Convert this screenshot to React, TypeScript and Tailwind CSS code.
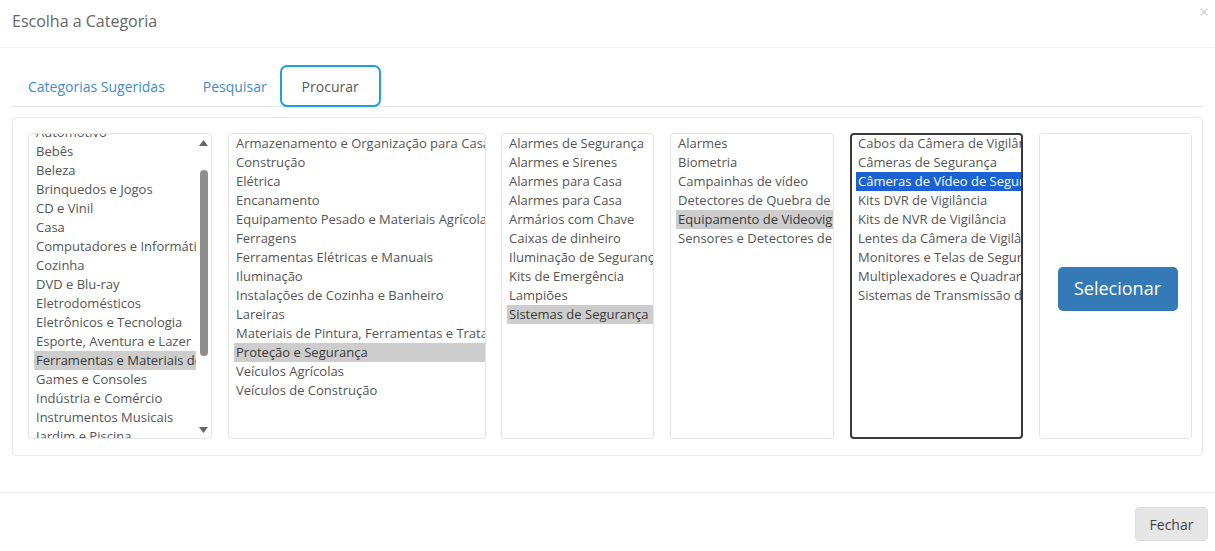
import React from 'react'

const col1 = [
    'Automotivo', 'Bebês', 'Beleza', 'Brinquedos e Jogos', 'CD e Vinil', 'Casa',
    'Computadores e Informática', 'Cozinha', 'DVD e Blu-ray', 'Eletrodomésticos',
    'Eletrônicos e Tecnologia', 'Esporte, Aventura e Lazer', 'Ferramentas e Materiais de Construção',
    'Games e Consoles', 'Indústria e Comércio', 'Instrumentos Musicais', 'Jardim e Piscina',
]

const col2 = [
    'Armazenamento e Organização para Casa', 'Construção', 'Elétrica', 'Encanamento',
    'Equipamento Pesado e Materiais Agrícolas', 'Ferragens', 'Ferramentas Elétricas e Manuais',
    'Iluminação', 'Instalações de Cozinha e Banheiro', 'Lareiras',
    'Materiais de Pintura, Ferramentas e Tratamento', 'Proteção e Segurança',
    'Veículos Agrícolas', 'Veículos de Construção',
]

const col3 = [
    'Alarmes de Segurança', 'Alarmes e Sirenes', 'Alarmes para Casa', 'Alarmes para Casa',
    'Armários com Chave', 'Caixas de dinheiro', 'Iluminação de Segurança', 'Kits de Emergência',
    'Lampiões', 'Sistemas de Segurança',
]

const col4 = [
    'Alarmes', 'Biometria', 'Campainhas de vídeo', 'Detectores de Quebra de Vidro',
    'Equipamento de Videovigilância', 'Sensores e Detectores de Movimento',
]

const col5 = [
    'Cabos da Câmera de Vigilância', 'Câmeras de Segurança', 'Câmeras de Vídeo de Segurança',
    'Kits DVR de Vigilância', 'Kits de NVR de Vigilância', 'Lentes da Câmera de Vigilância',
    'Monitores e Telas de Segurança', 'Multiplexadores e Quadrantes', 'Sistemas de Transmissão de Vídeo',
]

function Items({ items, selected, focused }: { items: string[]; selected: number; focused?: boolean }) {
    return (
        <>
            {items.map((item, i) => (
                <div
                    key={item + i}
                    className={
                        'h-[19px] leading-[19px] px-[2px] whitespace-nowrap overflow-hidden ' +
                        (i === selected
                            ? focused
                                ? 'bg-[#1a62d4] text-white'
                                : 'bg-[#cdcdcd] text-[#3a3a3a]'
                            : '')
                    }
                >
                    {item}
                </div>
            ))}
        </>
    )
}

function ListBox({ items, selected, width, focused }: { items: string[]; selected: number; width: string; focused?: boolean }) {
    return (
        <div
            className={
                width +
                ' h-[306px] shrink-0 overflow-hidden bg-white ' +
                (focused ? 'border-2 border-[#3a3a3a] rounded-[4px] pl-[4px]' : 'border border-[#e6e6e6] rounded-[3px] pl-[5px]')
            }
        >
            <div className={focused ? 'mt-[-1px]' : ''}>
                <Items items={items} selected={selected} focused={focused} />
            </div>
        </div>
    )
}

export default function App() {
    return (
        <div className="w-[1215px] h-[551px] bg-white text-[#555] overflow-hidden" style={{ fontFamily: '"Open Sans", "Noto Sans", sans-serif' }}>
            {/* Header */}
            <div className="h-[48px] border-b border-[#f0f0f0] flex items-start justify-between pl-[12px] pr-[6px]">
                <h4 className="text-[16px] text-[#666] mt-[9px]">Escolha a Categoria</h4>
                <button className="text-[#cfcfcf] text-[17px] leading-none mt-[3px]">×</button>
            </div>

            {/* Tabs */}
            <div className="mx-[12px] mt-[18px] border-b border-[#e5e5e5] flex items-end h-[41px] text-[14px]">
                <div className="pl-[16px] pr-[15px] h-full flex items-center text-[#3e8ccd]">Categorias Sugeridas</div>
                <div className="pl-[23px] pr-[13px] h-full flex items-center text-[#3e8ccd]">Pesquisar</div>
                <div className="w-[101px] h-[42px] mb-[-1px] flex items-center justify-center border-2 border-[#1aa0e3] rounded-[7px] bg-white text-[#5a5a5a]">
                    Procurar
                </div>
            </div>

            {/* Panel */}
            <div className="mx-[12px] mt-[10px] h-[339px] border border-[#e8e8e8] rounded-[4px] p-[15px] flex gap-[16px] text-[13px]">
                {/* first list with scrollbar */}
                <div className="w-[184px] h-[306px] shrink-0 border border-[#e6e6e6] rounded-[3px] flex bg-white overflow-hidden">
                    <div className="flex-1 overflow-hidden pl-[5px]">
                        <div className="mt-[-11px]">
                            <Items items={col1} selected={12} />
                        </div>
                    </div>
                    <div className="w-[15px] shrink-0 flex flex-col items-center pt-[6px] pb-[5px]">
                        <svg width="9" height="6" viewBox="0 0 9 6"><path d="M4.5 0 L9 6 L0 6 Z" fill="#666" /></svg>
                        <div className="w-[8px] h-[186px] rounded-full bg-[#8e8e8e] mt-[24px]" />
                        <div className="flex-1" />
                        <svg width="9" height="6" viewBox="0 0 9 6"><path d="M0 0 L9 0 L4.5 6 Z" fill="#666" /></svg>
                    </div>
                </div>

                <ListBox items={col2} selected={11} width="w-[258px]" />
                <div className="ml-[-1px]">
                    <ListBox items={col3} selected={9} width="w-[153px]" />
                </div>
                <ListBox items={col4} selected={4} width="w-[164px]" />
                <ListBox items={col5} selected={2} width="w-[173px]" focused />

                <div className="w-[153px] h-[306px] shrink-0 border border-[#e6e6e6] rounded-[3px] flex items-center justify-center pl-[4px] pt-[5px]">
                    <button className="w-[120px] h-[44px] rounded-[5px] bg-[#337ab7] text-white text-[18px]">Selecionar</button>
                </div>
            </div>

            {/* Footer */}
            <div className="mt-[36px] border-t border-[#ececec] flex justify-end pt-[14px] pr-[7px]">
                <button className="w-[73px] h-[34px] rounded-[4px] bg-[#e6e6e6] border border-[#dedede] text-[14px] text-[#444]">Fechar</button>
            </div>
        </div>
    )
}
